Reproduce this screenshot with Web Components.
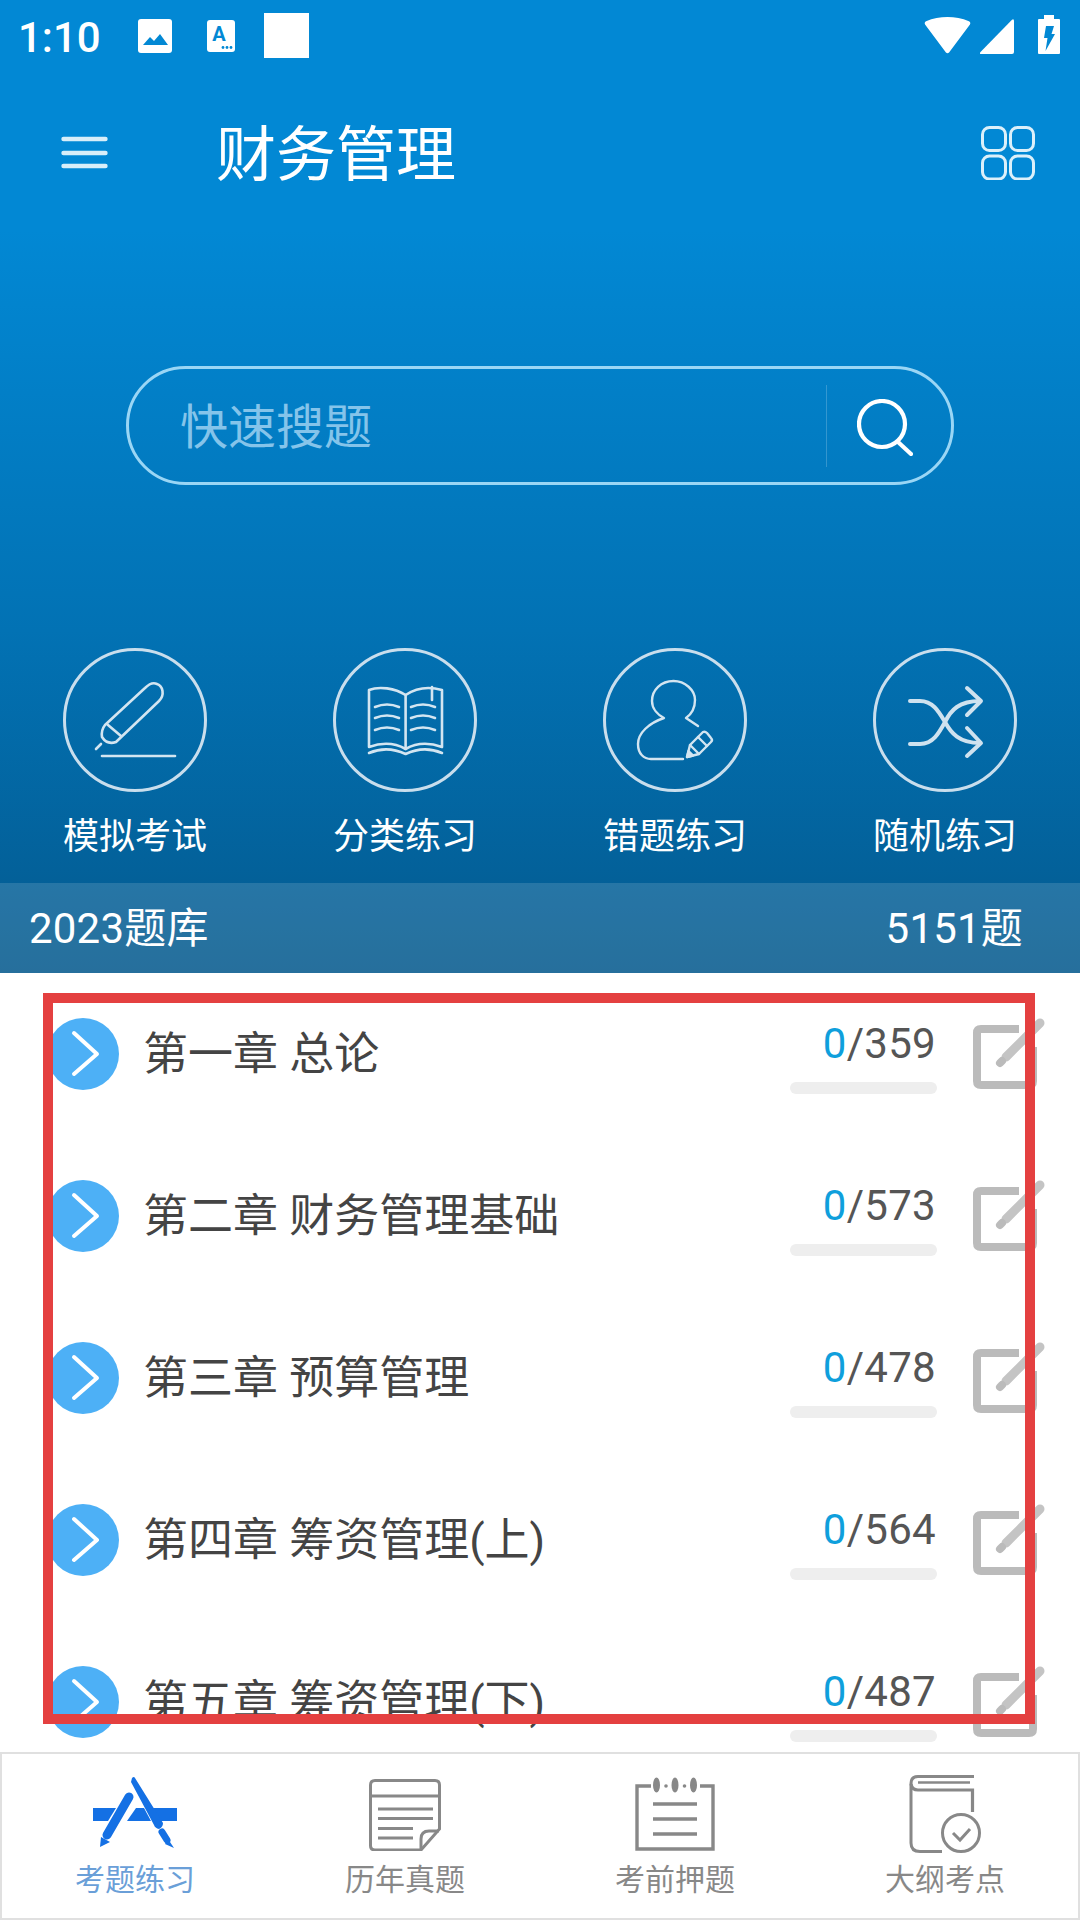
<!DOCTYPE html>
<html lang="zh-CN">
<head>
<meta charset="utf-8">
<title>财务管理</title>
<style>
  html, body { margin: 0; padding: 0; background: #fff; }
  body { font-family: Roboto, "Noto Sans CJK SC", sans-serif; }
</style>
</head>
<body>
<app-screen>
  <hero-panel>
    <status-bar></status-bar>
    <top-bar title="财务管理"></top-bar>
    <search-box placeholder="快速搜题"></search-box>
    <quick-actions>
      <quick-action label="模拟考试">
        <svg viewBox="0 0 144 144" fill="none" stroke="#d3e5f1" stroke-width="2.6" stroke-linecap="round" stroke-linejoin="round">
          <path d="M82 40 L42 77 Q38 82 39 89 Q44 97 53 94 L96 53 C102 47 100 38 94 36 C90 34 86 36 82 40Z"/>
          <path d="M45 77 L58 88"/><path d="M38 96 L33 101"/>
          <path d="M39 108 H112"/>
        </svg>
      </quick-action>
      <quick-action label="分类练习">
        <svg viewBox="0 0 144 144" fill="none" stroke="#d3e5f1" stroke-width="2.6" stroke-linecap="round" stroke-linejoin="round">
          <path d="M72.6 47 C62 40 46 38 36 42 V99 C50 94 62 95 72.6 101 C83 95 95 94 109 99 V42 C95 38 83 40 72.6 47Z"/>
          <path d="M72.6 47 V101"/><path d="M99 39 V52"/>
          <path d="M36 105 C50 99 62 101 72.6 106 C83 101 95 99 109 105"/>
          <path d="M42 59 Q54 54 66 59M42 70 Q54 65 66 70M42 82 Q54 77 66 82"/>
          <path d="M78 59 Q90 54 102 59M78 70 Q90 65 102 70M78 82 Q90 77 102 82"/>
        </svg>
      </quick-action>
      <quick-action label="错题练习">
        <svg viewBox="0 0 144 144" fill="none" stroke="#d3e5f1" stroke-width="2.4" stroke-linecap="round" stroke-linejoin="round">
          <path d="M95 78 L83 70 C90 65 92 57 92 52 C92 42 82 33 70.5 33 C58 33 49 42 49 53 C49 61 55 67 61 70 C46 75 35 85 35 96 C35 106 41 111 48 111 L80 111"/>
          <path d="M84 109 L87 97 L100 84 Q102 83 104 85 L108 90 Q110 92 108 94 L96 106Z"/>
          <path d="M87 97 L96 106M95 89 L104 98"/>
          <path d="M84 109 L85.5 103 L90 107.5Z" fill="#d3e5f1"/>
        </svg>
      </quick-action>
      <quick-action label="随机练习">
        <svg viewBox="0 0 144 144" fill="none" stroke="#cfe2ef" stroke-width="4" stroke-linecap="round" stroke-linejoin="round">
          <path d="M37 53 H47 C60 53 66 64 72 74 C78 85 86 95 107 95"/>
          <path d="M37 96 H47 C60 96 66 85 72 74 C78 62 86 53 107 53"/>
          <path d="M94 40 L108 53 L94 67"/><path d="M94 80 L108 95 L94 108"/>
        </svg>
      </quick-action>
    </quick-actions>
    <bank-bar name="2023题库" total="5151题"></bank-bar>
  </hero-panel>

  <chapter-list>
    <chapter-row title="第一章 总论" done="0" total="359"></chapter-row>
    <chapter-row title="第二章 财务管理基础" done="0" total="573"></chapter-row>
    <chapter-row title="第三章 预算管理" done="0" total="478"></chapter-row>
    <chapter-row title="第四章 筹资管理(上)" done="0" total="564"></chapter-row>
    <chapter-row title="第五章 筹资管理(下)" done="0" total="487"></chapter-row>
  </chapter-list>

  <tab-bar>
    <tab-item label="考题练习" active>
      <svg style="margin-bottom:2px" width="84" height="72" viewBox="0 0 84 72" fill="#1470e4">
        <path d="M0 31 H23 L15 44 H0Z"/><path d="M43 31 H51 L58 44 H34Z"/><path d="M59 31 H84 V44 H66Z"/>
        <path d="M36 20 L14 58" stroke="#1470e4" stroke-width="9" stroke-linecap="round"/>
        <path d="M7 70 L8 60 L17 65Z"/>
        <path d="M39 1 Q41 -1 42 1 L70 46 Q70 50 66 52 Q62 51 61 48 L38 5Z"/>
        <path d="M69 55 L74 63" stroke="#1470e4" stroke-width="7" stroke-linecap="round"/>
        <path d="M75 62 L81 71 L72 67Z"/>
      </svg>
    </tab-item>
    <tab-item label="历年真题">
      <svg width="72" height="72" viewBox="0 0 72 72" fill="none" stroke="#888" stroke-width="3">
        <path d="M6 1.5 H66 Q70.5 1.5 70.5 6 V50 L52 71 H6 Q1.5 71 1.5 66.5 V6 Q1.5 1.5 6 1.5Z"/>
        <path d="M1.5 17 H70.5"/><path d="M52 71 V60 Q52 52 60 52 H70"/>
        <path d="M9 30 H64M9 39.5 H64M9 49.5 H44M9 59 H44"/>
      </svg>
    </tab-item>
    <tab-item label="考前押题">
      <svg width="80" height="74" viewBox="0 0 80 74" fill="none" stroke="#888" stroke-width="3.4">
        <path d="M16 9 H2 V72 H78 V9 H65"/>
        <path d="M18 27 H62M18 42 H62M18 57 H62"/>
        <g fill="#888" stroke="none">
          <ellipse cx="21.5" cy="8" rx="3.5" ry="7.5"/><ellipse cx="40" cy="8" rx="3.5" ry="7.5"/><ellipse cx="58.5" cy="8" rx="3.5" ry="7.5"/>
          <circle cx="31" cy="9" r="1.8"/><circle cx="49.5" cy="9" r="1.8"/>
        </g>
      </svg>
    </tab-item>
    <tab-item label="大纲考点">
      <svg style="margin-bottom:-2px" width="72" height="78" viewBox="0 0 72 78" fill="none" stroke="#888" stroke-width="3">
        <path d="M65 1.5 H9 Q2 1.5 2 8.5 V68 Q2 76.5 11 76.5 H33"/>
        <path d="M9 7.5 H61" stroke-width="2.6"/>
        <path d="M2 9 Q3 15 9 15 H63.5 V37" stroke-width="3.2"/>
        <circle cx="52" cy="58" r="18.5"/>
        <path d="M44 58 L51 65 L61 54"/>
      </svg>
    </tab-item>
  </tab-bar>

  <highlight-frame></highlight-frame>
</app-screen>

<script>
const FONT = 'Roboto, "Noto Sans CJK SC", sans-serif';

class AppScreen extends HTMLElement {
  connectedCallback() {
    this.attachShadow({ mode: 'open' });
    this.shadowRoot.innerHTML = `
      <style>
        :host {
          display: flex;
          flex-direction: column;
          position: relative;
          width: 1080px;
          height: 1920px;
          overflow: hidden;
          background: #fff;
          font-family: ${FONT};
        }
      </style>
      <slot></slot>
    `;
  }
}

class HeroPanel extends HTMLElement {
  connectedCallback() {
    this.attachShadow({ mode: 'open' });
    this.shadowRoot.innerHTML = `
      <style>
        :host {
          display: flex;
          flex-direction: column;
          flex: none;
          height: 973px;
          color: #fff;
          background: linear-gradient(180deg, #0288d4 0, #0288d4 230px, #0272b4 630px, #03619a 870px, #03588c 973px);
        }
      </style>
      <slot></slot>
    `;
  }
}

class StatusBar extends HTMLElement {
  connectedCallback() {
    this.attachShadow({ mode: 'open' });
    this.shadowRoot.innerHTML = `
      <style>
        :host {
          display: flex;
          align-items: flex-start;
          flex: none;
          height: 72px;
          padding-left: 20px;
          box-sizing: border-box;
          color: #fff;
        }
        .time { font-size: 42px; font-weight: 500; line-height: 47px; margin: 14px 0 0 -2px; width: 120px; }
        svg { display: block; flex: none; }
        .pic { margin: 19px 35px 0 0; }
        .txt { margin: 20px 29px 0 0; }
        .box { width: 45px; height: 45px; margin-top: 13px; background: #fff; }
        .wifi { margin: 17px 9px 0 auto; }
        .sig { margin: 19px 24px 0 0; }
        .bat { margin: 15px 20px 0 0; }
      </style>
      <span class="time">1:10</span>
      <svg class="pic" width="34" height="34" viewBox="0 0 34 34">
        <rect width="34" height="34" rx="3" fill="#fff"/>
        <path d="M5 26 L12 18 L16 22 L22 15 L30 26Z" fill="#0288d4"/>
      </svg>
      <svg class="txt" width="28" height="32" viewBox="0 0 28 32">
        <rect width="28" height="32" rx="3" fill="#fff"/>
        <text x="12" y="21" text-anchor="middle" font-family="Roboto" font-weight="700" font-size="20" fill="#0288d4">A</text>
        <circle cx="16" cy="27.5" r="1.4" fill="#0288d4"/><circle cx="20" cy="27.5" r="1.4" fill="#0288d4"/><circle cx="24" cy="27.5" r="1.4" fill="#0288d4"/>
      </svg>
      <span class="box"></span>
      <svg class="wifi" width="47" height="37" viewBox="0 0 45 37" preserveAspectRatio="none">
        <path d="M1 7.5 Q0 5 2 4.2 C15 -1.4 30 -1.4 43 4.2 Q45 5 44 7.5 L24 35.5 Q22.5 37 21 35.5Z" fill="#fff"/>
      </svg>
      <svg class="sig" width="34" height="35" viewBox="0 0 34 35">
        <path d="M1 35 Q-1 35 .5 33 L32 .7 Q34 -.5 34 2 V33 Q34 35 32 35Z" fill="#fff"/>
      </svg>
      <svg class="bat" width="22" height="39" viewBox="0 0 22 39">
        <path d="M6 0 H16 V4 H21 Q22 4 22 5 V38 Q22 39 21 39 H1 Q0 39 0 38 V5 Q0 4 1 4 H6Z" fill="#fff"/>
        <path d="M8 11 H16 L13.5 19 H17 L7.5 36 L9.5 23 H6Z" fill="#0288d4"/>
      </svg>
    `;
  }
}

class TopBar extends HTMLElement {
  connectedCallback() {
    this.attachShadow({ mode: 'open' });
    this.shadowRoot.innerHTML = `
      <style>
        :host {
          display: flex;
          align-items: center;
          flex: none;
          height: 162px;
          padding: 0 45px 0 61px;
        }
        svg { display: block; flex: none; }
        h1 {
          flex: 1;
          margin: 5px 0 0 108px;
          font-size: 60px;
          font-weight: 400;
          line-height: 80px;
        }
      </style>
      <svg width="47" height="34" viewBox="0 0 47 34" fill="none" stroke="#d8eef9" stroke-width="4.4" stroke-linecap="round">
        <path d="M2.5 3 H44.5M2.5 17 H44.5M2.5 30 H44.5"/>
      </svg>
      <h1>${this.getAttribute('title')}</h1>
      <svg width="54" height="54" viewBox="0 0 54 54" fill="none" stroke="#dcf0fa" stroke-width="3">
        <rect x="1.5" y="1.5" width="23" height="23" rx="7"/><rect x="29.5" y="1.5" width="23" height="23" rx="7"/>
        <rect x="1.5" y="30" width="23" height="23" rx="7"/><rect x="29.5" y="30" width="23" height="23" rx="7"/>
      </svg>
    `;
  }
}

class SearchBox extends HTMLElement {
  connectedCallback() {
    this.attachShadow({ mode: 'open' });
    this.shadowRoot.innerHTML = `
      <style>
        :host {
          display: flex;
          align-items: center;
          flex: none;
          box-sizing: border-box;
          width: 828px;
          height: 119px;
          margin: 132px 0 0 126px;
          padding-left: 51px;
          border: 3px solid #9ad6f5;
          border-radius: 60px;
        }
        .hint { flex: 1; font-size: 48px; line-height: 60px; color: #85c4ea; padding-top: 4px; }
        .line { width: 1px; height: 82px; background: rgba(255,255,255,.2); }
        svg { display: block; margin: 3px 38px 0 30px; }
      </style>
      <span class="hint">${this.getAttribute('placeholder')}</span>
      <span class="line"></span>
      <svg width="56" height="57" viewBox="0 0 56 57" fill="none" stroke="#fff" stroke-width="4.2" stroke-linecap="round">
        <circle cx="25" cy="25" r="23"/><path d="M41 43 L54 55"/>
      </svg>
    `;
  }
}

class QuickActions extends HTMLElement {
  connectedCallback() {
    this.attachShadow({ mode: 'open' });
    this.shadowRoot.innerHTML = `
      <style>
        :host {
          display: grid;
          grid-template-columns: repeat(4, 270px);
          flex: none;
          height: 235px;
          margin-top: 163px;
        }
      </style>
      <slot></slot>
    `;
  }
}

class QuickAction extends HTMLElement {
  connectedCallback() {
    this.attachShadow({ mode: 'open' });
    this.shadowRoot.innerHTML = `
      <style>
        :host { display: flex; flex-direction: column; align-items: center; }
        .ring {
          box-sizing: border-box;
          width: 144px;
          height: 144px;
          border: 3px solid #c9deed;
          border-radius: 50%;
        }
        ::slotted(svg) { display: block; width: 144px; height: 144px; margin: -3px; }
        span { margin-top: 21px; font-size: 36px; line-height: 48px; color: #fff; }
      </style>
      <div class="ring"><slot></slot></div>
      <span>${this.getAttribute('label')}</span>
    `;
  }
}

class BankBar extends HTMLElement {
  connectedCallback() {
    this.attachShadow({ mode: 'open' });
    this.shadowRoot.innerHTML = `
      <style>
        :host {
          display: flex;
          align-items: center;
          justify-content: space-between;
          flex: none;
          box-sizing: border-box;
          height: 90px;
          padding: 0 57px 7px 29px;
          background: rgba(255,255,255,.14);
          font-size: 42px;
          letter-spacing: .2px;
          color: #fff;
        }
      </style>
      <span>${this.getAttribute('name')}</span>
      <span>${this.getAttribute('total')}</span>
    `;
  }
}

class ChapterList extends HTMLElement {
  connectedCallback() {
    this.attachShadow({ mode: 'open' });
    this.shadowRoot.innerHTML = `
      <style>
        :host { display: block; flex: 1; min-height: 0; overflow: hidden; background: #fff; }
      </style>
      <slot></slot>
    `;
  }
}

class ChapterRow extends HTMLElement {
  connectedCallback() {
    this.attachShadow({ mode: 'open' });
    this.shadowRoot.innerHTML = `
      <style>
        :host {
          display: flex;
          align-items: center;
          box-sizing: border-box;
          height: 162px;
          padding: 0 35px 0 47px;
        }
        .go { display: block; flex: none; }
        .name { flex: 1; margin-left: 24px; padding-bottom: 7px; font-size: 45px; color: #444; white-space: nowrap; }
        .stat { flex: none; width: 147px; padding-top: 5px; margin-right: 36px; }
        .count { font-size: 42px; line-height: 50px; letter-spacing: .3px; color: #555; text-align: right; white-space: nowrap; padding-right: 1px; }
        .count b { font-weight: 400; color: #0f9fdc; }
        .bar { height: 12px; margin-top: 13px; border-radius: 6px; background: #eee; }
        .edit { display: block; flex: none; margin-top: -3px; overflow: visible; }
      </style>
      <svg class="go" width="72" height="72" viewBox="0 0 72 72">
        <circle cx="36" cy="36" r="36" fill="#4db0f6"/>
        <path d="M27 15 L50 36 L27 56" fill="none" stroke="#fff" stroke-width="4" stroke-linecap="round" stroke-linejoin="round"/>
      </svg>
      <span class="name">${this.getAttribute('title')}</span>
      <div class="stat">
        <div class="count"><b>${this.getAttribute('done')}</b>/${this.getAttribute('total')}</div>
        <div class="bar"></div>
      </div>
      <svg class="edit" width="72" height="72" viewBox="0 0 72 72" fill="none" stroke="#bbb">
        <path d="M46 12 H8 Q4 12 4 16 V64 Q4 68 8 68 H56 Q60 68 60 64 V30" stroke-width="8"/>
        <path d="M33 40 L67 6" stroke="#c4c4c4" stroke-width="9" stroke-linecap="round"/>
        <path d="M27 46 L29 44" stroke-width="8" stroke-linecap="round"/>
      </svg>
    `;
  }
}

class TabBar extends HTMLElement {
  connectedCallback() {
    this.attachShadow({ mode: 'open' });
    this.shadowRoot.innerHTML = `
      <style>
        :host {
          display: grid;
          grid-template-columns: repeat(4, 270px);
          flex: none;
          box-sizing: border-box;
          height: 168px;
          padding-top: 2px;
          box-shadow: inset 0 0 0 2px #e0e0e0;
          background: #fff;
        }
      </style>
      <slot></slot>
    `;
  }
}

class TabItem extends HTMLElement {
  connectedCallback() {
    this.attachShadow({ mode: 'open' });
    this.shadowRoot.innerHTML = `
      <style>
        :host { display: flex; flex-direction: column; align-items: center; }
        .icon { display: flex; align-items: flex-end; height: 97px; }
        ::slotted(svg) { display: block; }
        span { margin-top: 9px; font-size: 30px; line-height: 40px; color: ${this.hasAttribute('active') ? '#6a9fd8' : '#888'}; }
      </style>
      <div class="icon"><slot></slot></div>
      <span>${this.getAttribute('label')}</span>
    `;
  }
}

class HighlightFrame extends HTMLElement {
  connectedCallback() {
    this.attachShadow({ mode: 'open' });
    this.shadowRoot.innerHTML = `
      <style>
        :host {
          position: absolute;
          left: 43px;
          top: 993px;
          width: 992px;
          height: 731px;
          box-sizing: border-box;
          border: 10px solid #e44040;
          pointer-events: none;
        }
      </style>
    `;
  }
}

customElements.define('app-screen', AppScreen);
customElements.define('hero-panel', HeroPanel);
customElements.define('status-bar', StatusBar);
customElements.define('top-bar', TopBar);
customElements.define('search-box', SearchBox);
customElements.define('quick-actions', QuickActions);
customElements.define('quick-action', QuickAction);
customElements.define('bank-bar', BankBar);
customElements.define('chapter-list', ChapterList);
customElements.define('chapter-row', ChapterRow);
customElements.define('tab-bar', TabBar);
customElements.define('tab-item', TabItem);
customElements.define('highlight-frame', HighlightFrame);
</script>
</body>
</html>
